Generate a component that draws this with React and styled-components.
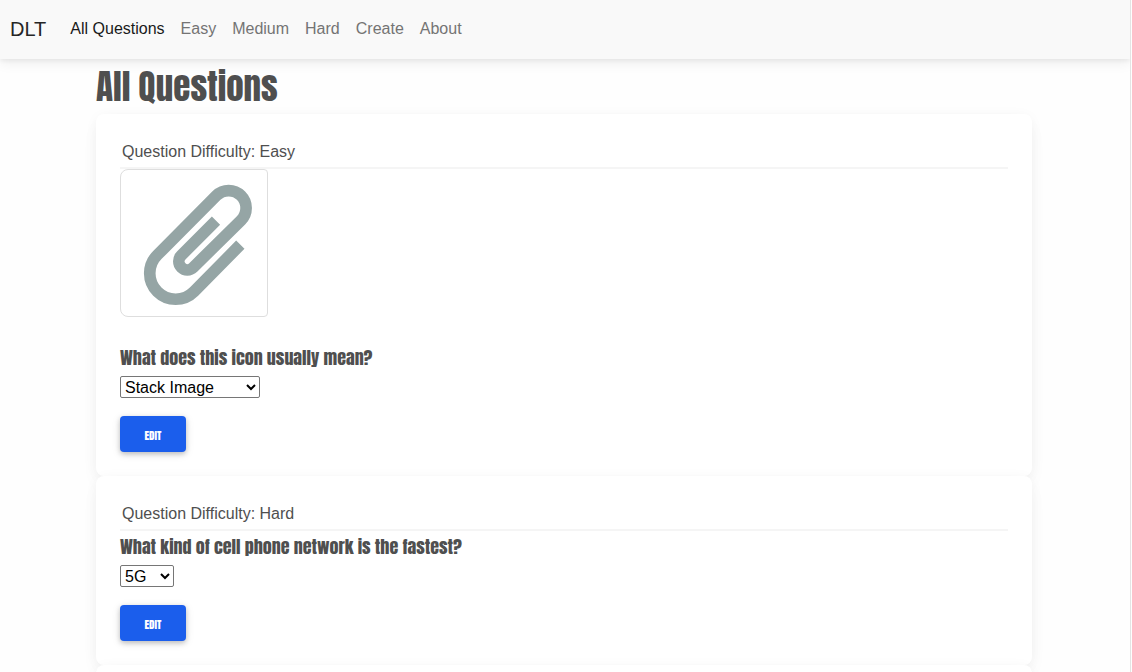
import React from 'react';
import styled, { createGlobalStyle } from 'styled-components';

const GlobalStyle = createGlobalStyle`
  *, *::before, *::after { box-sizing: border-box; }
  body {
    margin: 0;
    background: #fefefe;
    color: #4f4f4f;
    font-family: "Liberation Sans", Arial, sans-serif;
    font-size: 16px;
    line-height: 24px;
  }
`;

const displayFont = 'Anton, "Roboto Condensed", "Liberation Sans", sans-serif';

const Page = styled.div`
  height: 100vh;
  overflow: hidden auto;
  scrollbar-width: none;
  margin-right: 1px;
  border-right: 1px solid #e4e4e4;
`;

const Navbar = styled.nav`
  display: flex;
  align-items: center;
  gap: 24px;
  height: 59px;
  padding: 0 10px 2px;
  background: #f9f9f9;
  box-shadow: 0 4px 12px rgba(0, 0, 0, 0.07), 0 2px 4px rgba(0, 0, 0, 0.05);
`;

const Brand = styled.a`
  color: #262626;
  font-size: 20px;
  text-decoration: none;
`;

const NavList = styled.ul`
  display: flex;
  gap: 16px;
  margin: 0;
  padding: 0;
  list-style: none;
`;

const NavLink = styled.a`
  color: ${({ $active }) => ($active ? '#1a1a1a' : '#747474')};
  text-decoration: none;
`;

const Container = styled.main`
  margin: 0 98px 0 96px;
`;

const Title = styled.h1`
  margin: 0;
  padding: 4px 0 3px;
  font-family: ${displayFont};
  font-size: 35px;
  font-weight: 400;
  line-height: 48px;
`;

const Card = styled.article`
  padding: 24px;
  border-radius: 8px;
  background: #fff;
  box-shadow: 0 2px 15px -3px rgba(0, 0, 0, 0.07), 0 10px 20px -2px rgba(0, 0, 0, 0.04);
`;

const Difficulty = styled.p`
  margin: 0;
  padding: 2px 2px 3px;
  border-bottom: 2px solid #f5f5f5;
`;

const Thumbnail = styled.svg`
  display: block;
  width: 148px;
  height: 148px;
  margin-bottom: 25px;
  border: 1px solid #dedede;
  border-radius: 8px 4px 4px 8px;
  background: #fff;
`;

const Question = styled.label`
  display: block;
  padding-top: 1px;
  margin-bottom: 4px;
  font-family: ${displayFont};
  font-size: 18px;
  font-weight: 400;
  line-height: 29px;
`;

const AnswerSelect = styled.select`
  display: block;
  width: ${({ $width }) => $width};
  height: 22px;
  margin-bottom: 18px;
  border: 1px solid #767676;
  border-radius: 2px;
  background: #fff;
  color: #000;
  font-family: inherit;
  font-size: 16px;
`;

const EditButton = styled.button`
  display: block;
  min-width: 66px;
  height: 36px;
  padding: 4px 24px 0;
  border: 0;
  border-radius: 4px;
  background: #1b5eec;
  box-shadow: 0 2px 5px rgba(0, 0, 0, 0.2), 0 2px 10px rgba(0, 0, 0, 0.1);
  color: #fff;
  font-family: ${displayFont};
  font-size: 11px;
  font-weight: 400;
  line-height: 18px;
  text-transform: uppercase;
`;

const links = ['All Questions', 'Easy', 'Medium', 'Hard', 'Create', 'About'];

const questions = [
  { id: 'icon', level: 'Easy', text: 'What does this icon usually mean?', answer: 'Stack Image', width: '140px', picture: true },
  { id: 'network', level: 'Hard', text: 'What kind of cell phone network is the fastest?', answer: '5G', width: '54px' },
];

function Paperclip() {
  return (
    <Thumbnail viewBox="93 60 438 438" role="img" aria-label="Paperclip">
      <path
        d="M451 284 L312 425 A77 77 0 1 1 202 315 L379 137 A52 52 0 0 1 453 211 L310 352 A25 25 0 0 1 274 316 L378 212"
        fill="none"
        stroke="#95a5a5"
        strokeWidth="35"
      />
    </Thumbnail>
  );
}

function QuestionCard({ question }) {
  return (
    <Card>
      <Difficulty>Question Difficulty: {question.level}</Difficulty>
      {question.picture && <Paperclip />}
      <Question htmlFor={question.id}>{question.text}</Question>
      <AnswerSelect id={question.id} $width={question.width}>
        <option>{question.answer}</option>
      </AnswerSelect>
      <EditButton type="button">Edit</EditButton>
    </Card>
  );
}

export default function App() {
  return (
    <>
      <GlobalStyle />
      <Page>
        <Navbar>
          <Brand href="#">DLT</Brand>
          <NavList>
            {links.map((name, index) => (
              <li key={name}>
                <NavLink href="#" $active={index === 0}>{name}</NavLink>
              </li>
            ))}
          </NavList>
        </Navbar>
        <Container>
          <Title>All Questions</Title>
          {questions.map((question) => (
            <QuestionCard key={question.id} question={question} />
          ))}
          <Card />
        </Container>
      </Page>
    </>
  );
}
